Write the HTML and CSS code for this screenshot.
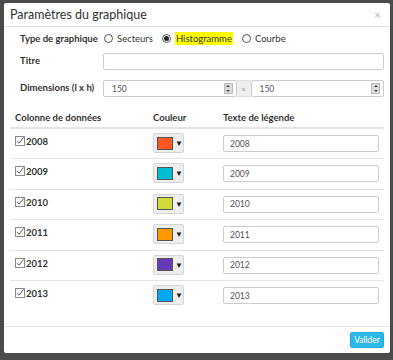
FILE: index.html
```html
<!DOCTYPE html>
<html lang="fr">
<head>
    <meta charset="UTF-8">
    <title>Paramètres du graphique</title>
    <link rel="stylesheet" href="styles.css">
</head>
<body>
    <div class="modal">
        <div class="modal-header">
            <h4 class="modal-title">Paramètres du graphique</h4>
            <span class="close">&times;</span>
        </div>

        <div class="modal-body">
            <div class="form-row row-type">
                <label class="form-label">Type de graphique</label>
                <div class="radios">
                    <label class="radio"><span class="radio-dot"></span>Secteurs</label>
                    <label class="radio checked"><span class="radio-dot"></span><span class="highlight">Histogramme</span></label>
                    <label class="radio"><span class="radio-dot"></span>Courbe</label>
                </div>
            </div>
            <div class="form-row row-title">
                <label class="form-label">Titre</label>
                <input type="text" class="text-input">
            </div>
            <div class="form-row row-dims">
                <label class="form-label">Dimensions (l x h)</label>
                <div class="input-group">
                    <div class="num-input">
                        <span>150</span>
                        <span class="spinner"><span class="up"></span><span class="down"></span></span>
                    </div>
                    <span class="addon">&times;</span>
                    <div class="num-input">
                        <span>150</span>
                        <span class="spinner"><span class="up"></span><span class="down"></span></span>
                    </div>
                </div>
            </div>

            <table class="series-table">
                <thead>
                    <tr>
                        <th class="col-name">Colonne de données</th>
                        <th class="col-color">Couleur</th>
                        <th>Texte de légende</th>
                    </tr>
                </thead>
                <tbody id="seriesRows"></tbody>
            </table>
        </div>

        <div class="modal-footer">
            <button class="btn-validate">Valider</button>
        </div>
    </div>

    <script>
        const series = [
            { year: '2008', color: '#ff5722' },
            { year: '2009', color: '#00bcd4' },
            { year: '2010', color: '#cddc39' },
            { year: '2011', color: '#ff9800' },
            { year: '2012', color: '#673ab7' },
            { year: '2013', color: '#03a9f4' }
        ];

        const tbody = document.getElementById('seriesRows');
        series.forEach(function(s) {
            const tr = document.createElement('tr');
            tr.innerHTML =
                '<td class="name-cell"><span class="check"><svg width="10" height="10" viewBox="0 0 10 10">' +
                '<rect x="0.5" y="0.5" width="9" height="9" fill="#fff" stroke="#888"/>' +
                '<path d="M2 5.2 L4 7.2 L8.5 1.5" fill="none" stroke="#555" stroke-width="1"/></svg>' +
                '</span><b>' + s.year + '</b></td>' +
                '<td><span class="color-btn"><span class="swatch" style="background:' + s.color + '"></span><span class="caret">&#9660;</span></span></td>' +
                '<td><input type="text" class="legend-input" value="' + s.year + '"></td>';
            tbody.appendChild(tr);
        });
    </script>
</body>
</html>
```

FILE: styles.css
```css
* {
    margin: 0;
    padding: 0;
    box-sizing: border-box;
    font-family: Lato, "Open Sans", sans-serif;
}

body {
    background-color: #4b4b4b;
    width: 393px;
    height: 360px;
    overflow: hidden;
}

/* Modal */
.modal {
    margin: 3px 3px 0 4px;
    width: 386px;
    height: 350px;
    background-color: white;
    border-radius: 2px;
    display: flex;
    flex-direction: column;
}

.modal-header {
    height: 24px;
    display: flex;
    justify-content: space-between;
    align-items: center;
    padding: 0 9px 0 6px;
    border-bottom: 1px solid #e5e5e5;
}

.modal-title {
    font-size: 12.5px;
    font-weight: normal;
    color: #333;
}

.close {
    font-size: 12px;
    color: #bbb;
}

.modal-body {
    flex: 1;
    padding: 0 6px;
}

/* Form rows */
.form-row {
    display: flex;
    padding-left: 10px;
}

.form-label {
    width: 83px;
    flex-shrink: 0;
    font-size: 9.5px;
    font-weight: bold;
    color: #333;
}

.row-type {
    height: 20px;
    margin-top: 1px;
    align-items: center;
}

.row-title {
    margin-top: 5px;
}

.row-dims {
    margin-top: 10px;
}

.row-title .form-label,
.row-dims .form-label {
    padding-top: 2px;
}

.radios {
    display: flex;
    align-items: center;
    gap: 9px;
    padding-left: 1px;
}

.radio {
    display: flex;
    align-items: center;
    font-size: 9.5px;
    color: #333;
}

.radio-dot {
    width: 9px;
    height: 9px;
    border: 1px solid #555;
    border-radius: 50%;
    margin-right: 4px;
    display: inline-flex;
    align-items: center;
    justify-content: center;
}

.checked .radio-dot::after {
    content: "";
    width: 5px;
    height: 5px;
    border-radius: 50%;
    background-color: #222;
}

.highlight {
    background-color: #ffff00;
    padding: 1px 1px;
}

.text-input {
    width: 282px;
    height: 17px;
    border: 1px solid #ccc;
    border-radius: 2px;
}

.input-group {
    display: flex;
    width: 282px;
    height: 17px;
}

.num-input {
    flex: 1;
    display: flex;
    align-items: center;
    justify-content: space-between;
    border: 1px solid #ccc;
    border-radius: 2px;
    padding: 0 3px 0 8px;
    font-size: 8.5px;
    color: #555;
}

.spinner {
    width: 9px;
    height: 11px;
    background-color: #ddd;
    border: 1px solid #bbb;
    display: flex;
    flex-direction: column;
    align-items: center;
    justify-content: space-around;
}

.spinner .up {
    border-left: 2px solid transparent;
    border-right: 2px solid transparent;
    border-bottom: 2px solid #444;
}

.spinner .down {
    border-left: 2px solid transparent;
    border-right: 2px solid transparent;
    border-top: 2px solid #444;
}

.addon {
    width: 14px;
    background-color: #eee;
    border-top: 1px solid #ddd;
    border-bottom: 1px solid #ddd;
    font-size: 8px;
    color: #999;
    display: flex;
    align-items: center;
    justify-content: center;
}

/* Series table */
.series-table {
    width: 374px;
    margin-top: 10px;
    border-collapse: collapse;
}

.series-table th {
    text-align: left;
    font-size: 9.5px;
    font-weight: bold;
    color: #333;
    height: 21px;
    padding: 0 5px;
    border-bottom: 2px solid #e5e5e5;
}

.col-name {
    width: 138px;
}

.col-color {
    width: 70px;
}

.series-table td {
    height: 30.5px;
    padding: 4px 5px 0;
    vertical-align: top;
    border-top: 1px solid #e5e5e5;
    font-size: 9.5px;
    color: #333;
}

.series-table td.name-cell {
    padding-top: 7px;
}

.series-table tbody tr:first-child td {
    border-top: none;
}

.check {
    display: inline-block;
    vertical-align: -1px;
    margin-right: 1px;
}

.check svg {
    display: block;
}

.color-btn {
    display: inline-flex;
    align-items: center;
    width: 31px;
    height: 20px;
    background-color: #eee;
    border: 1px solid #d5d5d5;
    border-radius: 2px;
    padding-left: 3px;
}

.swatch {
    width: 16px;
    height: 13px;
    border: 1px solid #555;
}

.caret {
    font-size: 8px;
    color: #222;
    margin-left: 2px;
}

.legend-input {
    width: 156px;
    height: 17px;
    margin-top: 2px;
    border: 1px solid #ccc;
    border-radius: 2px;
    padding-left: 6px;
    font-size: 8.5px;
    color: #555;
}

/* Footer */
.modal-footer {
    height: 27px;
    border-top: 1px solid #e5e5e5;
    display: flex;
    justify-content: flex-end;
    align-items: center;
    padding-right: 6px;
}

.btn-validate {
    width: 34px;
    height: 16px;
    background-color: #2cb8e8;
    color: white;
    border: 1px solid #22a8d6;
    border-radius: 2px;
    font-size: 8.5px;
}
```
